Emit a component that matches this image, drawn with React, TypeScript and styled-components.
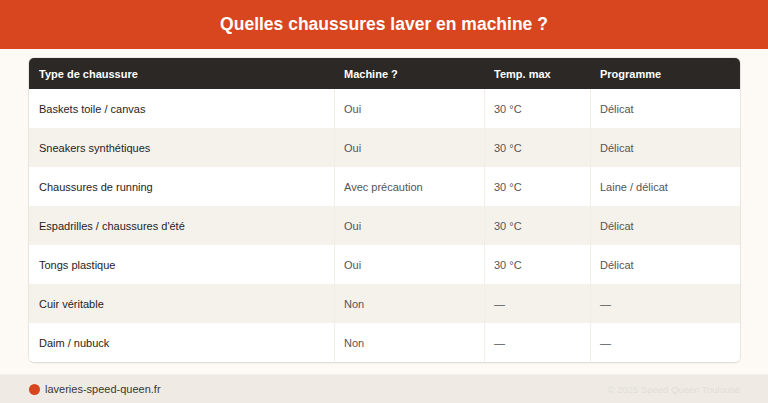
import React from "react";
import styled, { createGlobalStyle } from "styled-components";

const Global = createGlobalStyle`
  html, body { margin: 0; padding: 0; }
  body {
    background: #fdf9f5;
    font-family: "Liberation Sans", Arial, Helvetica, sans-serif;
    -webkit-font-smoothing: antialiased;
  }
`;

const Page = styled.div`
  width: 768px;
  height: 403px;
  display: flex;
  flex-direction: column;
  background: #fdf9f5;
  overflow: hidden;
`;

const Banner = styled.header`
  height: 49px;
  flex: none;
  background: #d84620;
  display: flex;
  align-items: center;
  justify-content: center;
`;

const Title = styled.h1`
  margin: 0;
  color: #ffffff;
  font-size: 17.5px;
  font-weight: 700;
  letter-spacing: 0;
`;

const Main = styled.main`
  flex: 1;
  padding: 9px 28px 0 29px;
`;

const Card = styled.div`
  width: 711px;
  border-radius: 5px;
  overflow: hidden;
  background: #ffffff;
  box-shadow: 0 0 0 1px rgba(0, 0, 0, 0.06), 0 1px 2px rgba(0, 0, 0, 0.08);
`;

const Grid = styled.div`
  display: grid;
  grid-template-columns: 305px 150px 106px 150px;
`;

const HeadCell = styled.div`
  height: 31px;
  background: #2b2825;
  color: #ffffff;
  font-size: 11px;
  font-weight: 700;
  display: flex;
  align-items: center;
  padding-left: 10px;
`;

const Cell = styled.div<{ $alt: boolean; $first: boolean }>`
  height: 39px;
  box-sizing: border-box;
  background: ${(p) => (p.$alt ? "#f5f2ec" : "#ffffff")};
  border-left: ${(p) => (p.$first ? "none" : "1px solid #f1ede7")};
  color: ${(p) => (p.$first ? "#1e1e1e" : "#555555")};
  font-size: 11px;
  font-weight: 400;
  display: flex;
  align-items: center;
  padding-left: ${(p) => (p.$first ? "10px" : "9px")};
`;

const Footer = styled.footer`
  height: 28px;
  flex: none;
  background: #efebe4;
  border-top: 1px solid #f3efe9;
  display: flex;
  align-items: center;
  justify-content: space-between;
  padding: 0 28px 0 29px;
`;

const Brand = styled.div`
  display: flex;
  align-items: center;
  gap: 5px;
  font-size: 11px;
  color: #3a3735;
`;

const Dot = styled.span`
  width: 11px;
  height: 11px;
  border-radius: 50%;
  background: #d84620;
  display: inline-block;
`;

const Copy = styled.div`
  font-size: 9.5px;
  color: #e2ded6;
`;

const headers = ["Type de chaussure", "Machine ?", "Temp. max", "Programme"];
const rows = [
  ["Baskets toile / canvas", "Oui", "30 °C", "Délicat"],
  ["Sneakers synthétiques", "Oui", "30 °C", "Délicat"],
  ["Chaussures de running", "Avec précaution", "30 °C", "Laine / délicat"],
  ["Espadrilles / chaussures d'été", "Oui", "30 °C", "Délicat"],
  ["Tongs plastique", "Oui", "30 °C", "Délicat"],
  ["Cuir véritable", "Non", "—", "—"],
  ["Daim / nubuck", "Non", "—", "—"],
];

export default function App() {
  return (
    <Page>
      <Global />
      <Banner>
        <Title>Quelles chaussures laver en machine ?</Title>
      </Banner>
      <Main>
        <Card>
          <Grid>
            {headers.map((h) => (
              <HeadCell key={h}>{h}</HeadCell>
            ))}
            {rows.map((r, i) =>
              r.map((c, j) => (
                <Cell key={`${i}-${j}`} $alt={i % 2 === 1} $first={j === 0}>
                  {c}
                </Cell>
              ))
            )}
          </Grid>
        </Card>
      </Main>
      <Footer>
        <Brand>
          <Dot />
          laveries-speed-queen.fr
        </Brand>
        <Copy>© 2025 Speed Queen Toulouse</Copy>
      </Footer>
    </Page>
  );
}
